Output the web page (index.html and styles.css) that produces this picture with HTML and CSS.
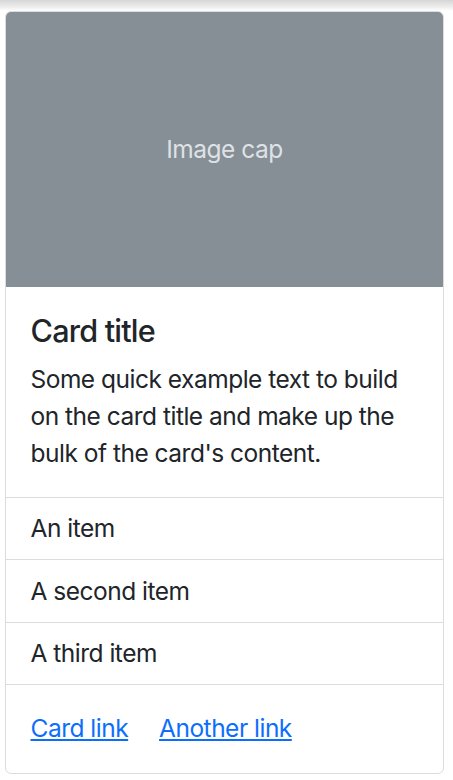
FILE: index.html
```html
<!DOCTYPE html>
<html lang="en">
<head>
<meta charset="utf-8">
<title>Card</title>
<link rel="stylesheet" href="styles.css">
</head>
<body>
<div class="topshade"></div>
<div class="card">
  <div class="card-img">
    <span class="card-img-text">Image cap</span>
  </div>
  <div class="card-body">
    <h5 class="card-title">Card title</h5>
    <p class="card-text">Some quick example text to build on the card title and make up the bulk of the card's content.</p>
  </div>
  <ul class="list-group">
    <li class="list-item">An item</li>
    <li class="list-item">A second item</li>
    <li class="list-item">A third item</li>
  </ul>
  <div class="card-body card-links">
    <a href="#" class="card-link">Card link</a> <a href="#" class="card-link">Another link</a>
  </div>
</div>
</body>
</html>
```

FILE: styles.css
```css
* { box-sizing: border-box; }
html, body {
  margin: 0;
  padding: 0;
  background: #fff;
}
body {
  font-family: Inter, "Liberation Sans", Arial, sans-serif;
  font-size: 24.5px;
  line-height: 37px;
  letter-spacing: -0.5px;
  color: #212529;
}
.topshade {
  height: 11px;
  background: linear-gradient(to bottom, #d6d6d6 0%, #ececec 60%, #ffffff 100%);
}
.card {
  margin-left: 5px;
  width: 439px;
  border: 1px solid #dcdcdc;
  border-radius: 6px;
  overflow: hidden;
  background: #fff;
}
.card-img {
  height: 275px;
  background: #868e96;
  display: flex;
  align-items: center;
  justify-content: center;
}
.card-img-text {
  color: #dee2e6;
}
.card-body {
  padding: 25px 24.5px;
}
.card-title {
  margin: 0 0 12px 0;
  font-size: 30.6px;
  font-weight: 500;
  line-height: 37px;
  letter-spacing: -0.8px;
}
.card-text {
  margin: 0;
}
.list-group {
  list-style: none;
  margin: 0;
  padding: 0;
  border-top: 1px solid #dcdcdc;
}
.list-item {
  padding: 12.25px 24.5px 12px;
  border-bottom: 1px solid #dcdcdc;
}
.card-links {
  padding-top: 25.5px;
  padding-bottom: 25.5px;
}
.card-link {
  color: #0d6efd;
  text-decoration: underline;
}
.card-link + .card-link {
  margin-left: 24.5px;
}
```
